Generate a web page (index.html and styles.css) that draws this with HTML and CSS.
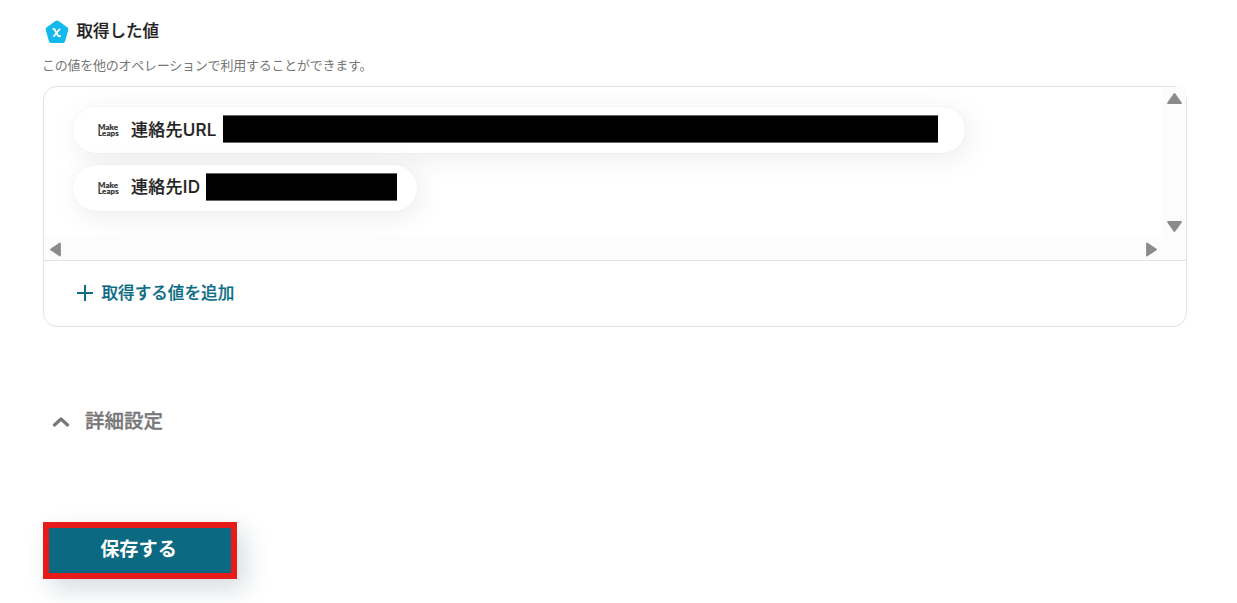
FILE: index.html
```
<!DOCTYPE html>
<html lang="ja">

<head>
    <meta charset="UTF-8">
    <title>取得した値</title>
    <link rel="stylesheet" href="styles.css">
</head>

<body>
    <div class="output">
        <div class="output-title">
            <svg class="icon-value" width="24" height="24" viewBox="0 0 24 24">
                <path d="M10.4 1.1Q12 0 13.6 1.1L22.2 7.2Q23.8 8.4 23.2 10.2L20 21.4Q19.3 23 17.6 23H6.4Q4.7 23 4 21.4L.8 10.2Q.2 8.4 1.8 7.2Z" fill="#12b9ec"/>
                <path d="M7.6 9.2H9.4L13.4 16.2H15.8M15 8.7L8.4 16.8" fill="none" stroke="#fff" stroke-width="1.8"/>
            </svg>
            <h2>取得した値</h2>
        </div>
        <p class="output-desc">この値を他のオペレーションで利用することができます。</p>
        <div class="panel">
            <div class="scroll">
                <div class="scroll-body">
                    <div class="pill pill-url">
                        <div class="logo"><span>Make</span><span>Leaps</span></div>
                        <span class="pill-name">連絡先URL</span>
                        <span class="mask"></span>
                    </div>
                    <div class="pill pill-id">
                        <div class="logo"><span>Make</span><span>Leaps</span></div>
                        <span class="pill-name">連絡先ID</span>
                        <span class="mask"></span>
                    </div>
                </div>
                <div class="bar-y">
                    <svg width="15" height="11" viewBox="0 0 15 11"><path d="M7.5 1L14 10H1Z"/></svg>
                    <svg width="15" height="11" viewBox="0 0 15 11"><path d="M7.5 10L14 1H1Z"/></svg>
                </div>
                <div class="bar-x">
                    <svg width="11" height="15" viewBox="0 0 11 15"><path d="M1 7.5L10 1.5V13.5Z"/></svg>
                    <svg width="11" height="15" viewBox="0 0 11 15"><path d="M10 7.5L1 1.5V13.5Z"/></svg>
                </div>
                <div class="bar-corner"></div>
            </div>
            <div class="add">
                <svg width="16" height="16" viewBox="0 0 16 16"><path d="M8 0V16M0 8H16"/></svg>
                <span>取得する値を追加</span>
            </div>
        </div>
    </div>
    <div class="advanced">
        <svg width="18" height="12" viewBox="0 0 18 12"><path d="M2.5 10L9 4L15.5 10"/></svg>
        <span>詳細設定</span>
    </div>
    <div class="save">保存する</div>
</body>

</html>
```

FILE: styles.css
```
* {
    margin: 0;
    padding: 0;
    box-sizing: border-box;
}
body {
    height: 603px;
    padding: 17px 50px 0 43px;
    background: #fff;
    color: #222;
    font-family: "Noto Sans CJK JP", sans-serif;
    overflow: hidden;
}
svg {
    display: block;
    flex: none;
}
.output-title {
    display: flex;
    align-items: center;
    height: 26px;
    padding-left: 2px;
}
.icon-value {
    margin: 3px 7.4px 0 0;
}
.output-title h2 {
    font-size: 16.5px;
    font-weight: 500;
    line-height: 26px;
    -webkit-text-stroke: 0.2px;
}
.output-desc {
    height: 43px;
    margin-left: -1px;
    padding-top: 12px;
    color: #777;
    font-size: 13px;
    line-height: 20px;
    letter-spacing: -0.24px;
    white-space: nowrap;
}
.panel {
    height: 241px;
    border: 1px solid #e3e3e3;
    border-radius: 14px;
}
.scroll {
    display: grid;
    grid-template-columns: 1fr 23px;
    grid-template-rows: 150px 23px;
    height: 174px;
    border-bottom: 1px solid #e3e3e3;
}
.scroll-body {
    padding: 20px 0 0 29px;
    overflow: hidden;
    border-top-left-radius: 13px;
}
.bar-y,
.bar-x {
    display: flex;
    justify-content: space-between;
    align-items: center;
    background: #fcfcfc;
    fill: #8b8b8b;
    stroke: #8b8b8b;
    stroke-width: 1.8px;
    stroke-linejoin: round;
}
.bar-y {
    flex-direction: column;
    padding: 6px 0 5px;
}
.bar-x {
    padding: 1px 6px 0;
}
.bar-corner {
    background: #fcfcfc;
}
.pill {
    display: flex;
    align-items: center;
    height: 46px;
    margin-bottom: 12px;
    padding-left: 25px;
    border-radius: 23px;
    background: #fff;
    box-shadow: 4px 5px 28px rgba(0, 0, 0, 0.08), 0 0 2px rgba(0, 0, 0, 0.06);
}
.pill-url {
    width: 892px;
}
.pill-id {
    width: 344px;
}
.logo {
    width: 33px;
    color: #333;
    font-family: Lato, sans-serif;
    font-size: 7.8px;
    font-weight: 900;
    line-height: 6px;
    letter-spacing: 0.15px;
    -webkit-text-stroke: 0.2px;
}
.logo span {
    display: block;
}
.pill-name {
    flex: none;
    margin-bottom: 1px;
    font-family: Inter, "Noto Sans CJK JP", sans-serif;
    font-size: 17px;
    font-weight: 500;
    line-height: 24px;
    letter-spacing: 0.25px;
    -webkit-text-stroke: 0.2px;
}
.pill-url .pill-name {
    width: 92px;
}
.pill-id .pill-name {
    width: 75px;
    margin-bottom: 2px;
}
.mask {
    height: 28px;
    margin-bottom: 2px;
    border: solid #666;
    border-width: 1px 0;
    background: #000;
}
.pill-url .mask {
    width: 715px;
}
.pill-id .mask {
    width: 191px;
}
.add {
    display: flex;
    align-items: center;
    height: 64px;
    padding: 0 0 1px 33px;
    color: #0b6b84;
    font-size: 16.6px;
    font-weight: 500;
}
.add svg {
    margin-right: 8.5px;
    fill: none;
    stroke: #0b6b84;
    stroke-width: 2px;
}
.add span {
    margin-bottom: 1px;
    -webkit-text-stroke: 0.2px;
}
.advanced {
    display: flex;
    align-items: center;
    height: 30px;
    margin: 79px 0 0 9px;
    color: #777;
    font-size: 19.5px;
    font-weight: 500;
}
.advanced svg {
    margin-right: 15px;
    fill: none;
    stroke: #777;
    stroke-width: 3.2px;
    stroke-linecap: round;
    stroke-linejoin: round;
}
.advanced span {
    margin-bottom: 3px;
    -webkit-text-stroke: 0.3px;
}
.save {
    width: 194px;
    height: 57px;
    margin-top: 86px;
    padding-right: 3px;
    border: 6px solid #e81b1b;
    background: #0b6982;
    box-shadow: 8px 10px 24px rgba(11, 50, 70, 0.17);
    color: #fff;
    font-size: 19.2px;
    font-weight: 700;
    line-height: 40px;
    text-align: center;
}
```
